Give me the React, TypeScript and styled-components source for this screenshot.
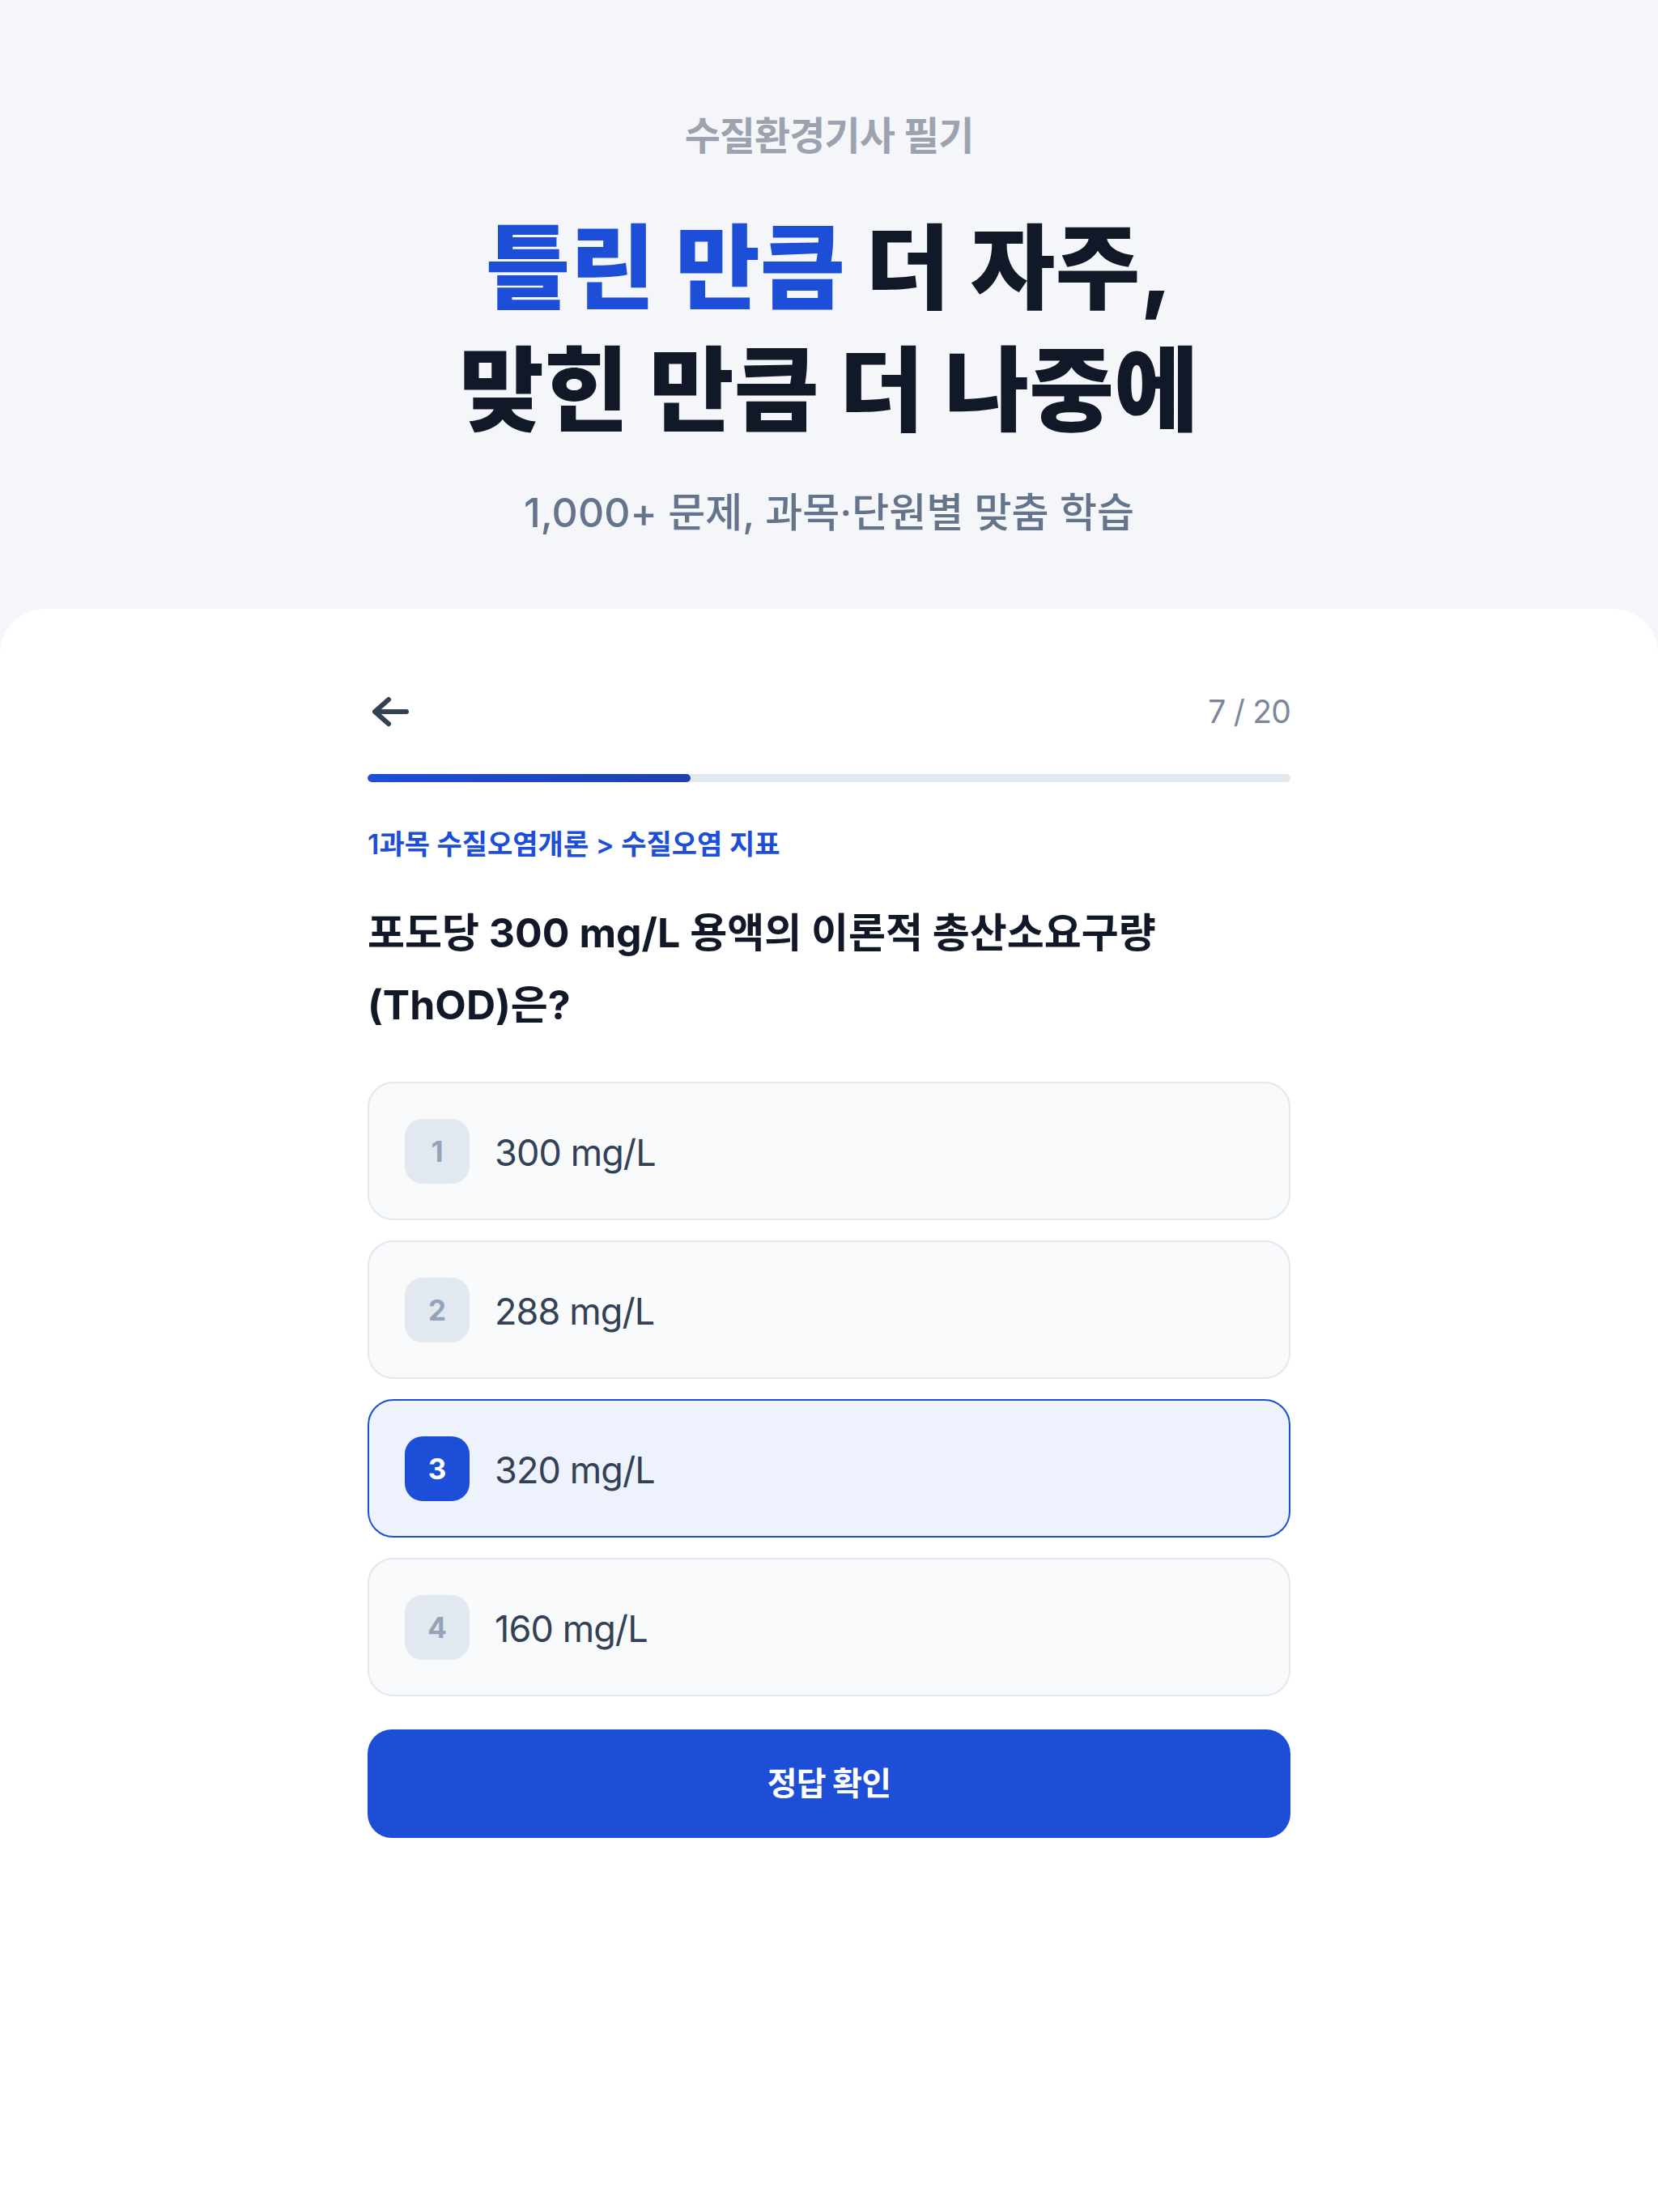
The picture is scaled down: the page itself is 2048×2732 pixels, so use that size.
import React from "react";
import styled, { createGlobalStyle } from "styled-components";

const GlobalStyle = createGlobalStyle`
  * { box-sizing: border-box; }
  html, body { margin: 0; padding: 0; background: #f4f6fa; }
  body {
    font-family: Inter, "Noto Sans CJK KR", "Noto Sans", sans-serif;
    -webkit-font-smoothing: antialiased;
    word-break: keep-all;
  }
  button { font-family: inherit; }
`;

const Page = styled.div`
  min-height: 100vh;
  display: flex;
  flex-direction: column;
  background: #f4f6fa;
`;

const Hero = styled.header`
  display: flex;
  flex-direction: column;
  align-items: center;
  text-align: center;
  padding: 138px 0 87px;
`;

const Eyebrow = styled.div`
  font-size: 48px;
  line-height: 60px;
  font-weight: 600;
  letter-spacing: -0.02em;
  color: #9ca3af;
`;

const Headline = styled.h1`
  margin: 57px 0 0;
  font-size: 114px;
  line-height: 151px;
  font-weight: 800;
  letter-spacing: 0;
  color: #111827;
`;

const Accent = styled.span`
  color: #1d4ed8;
`;

const Lead = styled.p`
  margin: 44px 0 0;
  font-size: 50px;
  line-height: 64px;
  font-weight: 500;
  letter-spacing: 0;
  color: #64748b;
`;

const Card = styled.main`
  flex: 1;
  background: #ffffff;
  border-radius: 56px 56px 0 0;
  display: flex;
  justify-content: center;
  padding: 106px 0 120px;
`;

const Column = styled.div`
  width: 1140px;
  display: flex;
  flex-direction: column;
`;

const TopBar = styled.div`
  height: 42px;
  display: flex;
  align-items: center;
  justify-content: space-between;
`;

const BackButton = styled.button`
  border: 0;
  background: none;
  padding: 0;
  width: 52px;
  height: 42px;
  display: flex;
  color: #334155;
  cursor: pointer;
`;

const Counter = styled.span`
  font-size: 39px;
  line-height: 42px;
  font-weight: 400;
  letter-spacing: -0.02em;
  color: #7d879a;
`;

const Track = styled.div`
  margin-top: 56px;
  height: 10px;
  border-radius: 999px;
  background: #e2e8f0;
  overflow: hidden;
`;

const Fill = styled.div`
  height: 100%;
  border-radius: 999px;
  background: linear-gradient(90deg, #1d4ed8, #1e40af);
`;

const Breadcrumb = styled.div`
  margin-top: 55px;
  font-size: 34px;
  line-height: 44px;
  font-weight: 600;
  letter-spacing: 0;
  color: #1d4ed8;
`;

const Question = styled.h2`
  margin: 43px 0 0;
  font-size: 50px;
  line-height: 89px;
  font-weight: 700;
  letter-spacing: 0;
  color: #111827;
  word-break: keep-all;
`;

const Options = styled.div`
  margin-top: 50px;
  display: flex;
  flex-direction: column;
  gap: 25px;
`;

const Option = styled.button<{ $selected?: boolean }>`
  height: 171px;
  width: 100%;
  display: flex;
  align-items: center;
  gap: 31px;
  padding: 0 44px;
  border-radius: 32px;
  border: 2px solid ${(p) => (p.$selected ? "#1d4ed8" : "#e2e8f0")};
  background: ${(p) => (p.$selected ? "#edf2fd" : "#f8fafc")};
  text-align: left;
  cursor: pointer;
`;

const Badge = styled.span<{ $selected?: boolean }>`
  flex: 0 0 80px;
  width: 80px;
  height: 80px;
  border-radius: 22px;
  display: flex;
  align-items: center;
  justify-content: center;
  font-size: 35px;
  font-weight: 700;
  background: ${(p) => (p.$selected ? "#1d4ed8" : "#e2e8f0")};
  color: ${(p) => (p.$selected ? "#ffffff" : "#94a3b8")};
`;

const OptionText = styled.span`
  font-size: 45px;
  line-height: 60px;
  padding-top: 4px;
  font-weight: 400;
  letter-spacing: -0.02em;
  color: #334155;
`;

const Submit = styled.button`
  margin-top: 41px;
  height: 134px;
  width: 100%;
  border: 0;
  border-radius: 30px;
  background: #1d4ed8;
  color: #ffffff;
  font-size: 40px;
  font-weight: 700;
  letter-spacing: -0.02em;
  padding: 0 0 6px;
  cursor: pointer;
`;

const options = ["300 mg/L", "288 mg/L", "320 mg/L", "160 mg/L"];
const selected = 2;
const current = 7;
const total = 20;

function ArrowLeft() {
  return (
    <svg width="52" height="42" viewBox="0 0 52 42" fill="none">
      <path
        d="M26 6 9 21l17 15M9 21h39"
        stroke="currentColor"
        strokeWidth="6"
        strokeLinecap="round"
        strokeLinejoin="round"
      />
    </svg>
  );
}

export default function App() {
  return (
    <>
      <GlobalStyle />
      <Page>
        <Hero>
          <Eyebrow>수질환경기사 필기</Eyebrow>
          <Headline>
            <Accent>틀린 만큼</Accent> 더 자주,
            <br />
            맞힌 만큼 더 나중에
          </Headline>
          <Lead>1,000+ 문제, 과목·단원별 맞춤 학습</Lead>
        </Hero>
        <Card>
          <Column>
            <TopBar>
              <BackButton aria-label="뒤로">
                <ArrowLeft />
              </BackButton>
              <Counter>
                {current} / {total}
              </Counter>
            </TopBar>
            <Track>
              <Fill style={{ width: `${(current / total) * 100}%` }} />
            </Track>
            <Breadcrumb>1과목 수질오염개론 &gt; 수질오염 지표</Breadcrumb>
            <Question>포도당 300 mg/L 용액의 이론적 총산소요구량 (ThOD)은?</Question>
            <Options>
              {options.map((o, i) => (
                <Option key={o} $selected={i === selected}>
                  <Badge $selected={i === selected}>{i + 1}</Badge>
                  <OptionText>{o}</OptionText>
                </Option>
              ))}
            </Options>
            <Submit>정답 확인</Submit>
          </Column>
        </Card>
      </Page>
    </>
  );
}
